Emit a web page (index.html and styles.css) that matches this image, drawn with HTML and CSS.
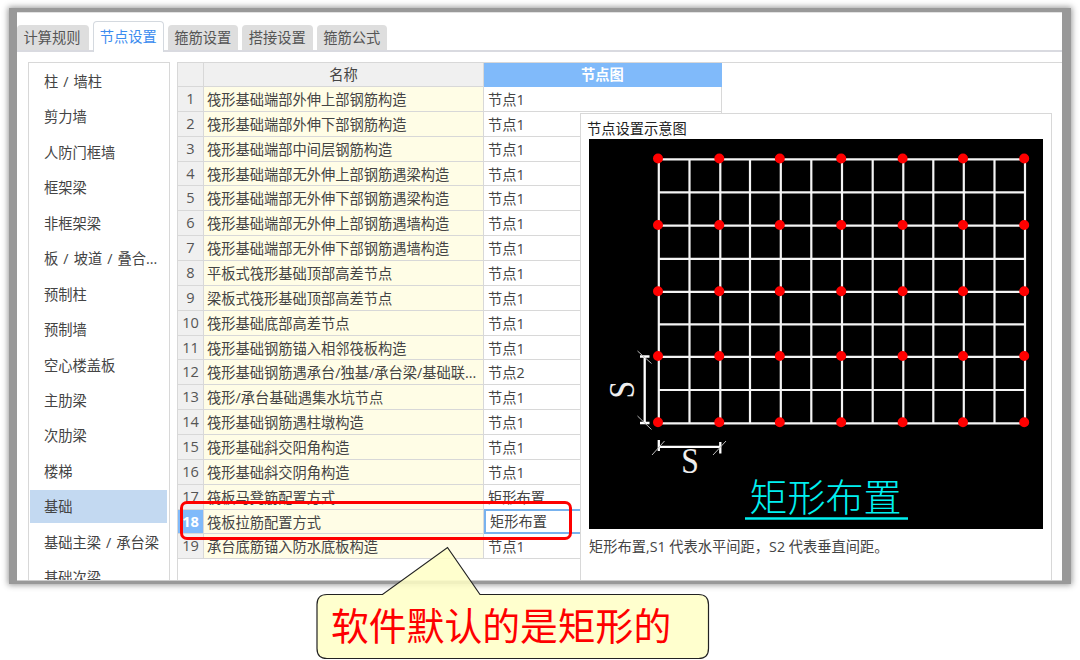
FILE: index.html
```html
<!DOCTYPE html>
<html lang="zh-CN">
<head>
    <meta charset="UTF-8">
    <meta name="viewport" content="width=device-width, initial-scale=1.0">
    <title>节点设置</title>
    <link rel="stylesheet" href="styles.css">
</head>
<body>

    <div class="frame">
        <div class="window">
            <div class="tabs">
                <div class="tab first">计算规则</div>
                <div class="tab active">节点设置</div>
                <div class="tab">箍筋设置</div>
                <div class="tab">搭接设置</div>
                <div class="tab">箍筋公式</div>
            </div>

            <div class="content">
                <ul class="sidebar">
                    <li>柱 / 墙柱</li>
                    <li>剪力墙</li>
                    <li>人防门框墙</li>
                    <li>框架梁</li>
                    <li>非框架梁</li>
                    <li class="wide">板 / 坡道 / 叠合...</li>
                    <li>预制柱</li>
                    <li>预制墙</li>
                    <li>空心楼盖板</li>
                    <li>主肋梁</li>
                    <li>次肋梁</li>
                    <li>楼梯</li>
                    <li class="selected">基础</li>
                    <li>基础主梁 / 承台梁</li>
                    <li>基础次梁</li>
                </ul>

                <div class="main">
                    <div class="row head"><div class="num"></div><div class="name">名称</div><div class="node">节点图</div></div>
                    <div class="row"><div class="num">1</div><div class="name">筏形基础端部外伸上部钢筋构造</div><div class="node">节点1</div></div>
                    <div class="row"><div class="num">2</div><div class="name">筏形基础端部外伸下部钢筋构造</div><div class="node">节点1</div></div>
                    <div class="row"><div class="num">3</div><div class="name">筏形基础端部中间层钢筋构造</div><div class="node">节点1</div></div>
                    <div class="row"><div class="num">4</div><div class="name">筏形基础端部无外伸上部钢筋遇梁构造</div><div class="node">节点1</div></div>
                    <div class="row"><div class="num">5</div><div class="name">筏形基础端部无外伸下部钢筋遇梁构造</div><div class="node">节点1</div></div>
                    <div class="row"><div class="num">6</div><div class="name">筏形基础端部无外伸上部钢筋遇墙构造</div><div class="node">节点1</div></div>
                    <div class="row"><div class="num">7</div><div class="name">筏形基础端部无外伸下部钢筋遇墙构造</div><div class="node">节点1</div></div>
                    <div class="row"><div class="num">8</div><div class="name">平板式筏形基础顶部高差节点</div><div class="node">节点1</div></div>
                    <div class="row"><div class="num">9</div><div class="name">梁板式筏形基础顶部高差节点</div><div class="node">节点1</div></div>
                    <div class="row"><div class="num">10</div><div class="name">筏形基础底部高差节点</div><div class="node">节点1</div></div>
                    <div class="row"><div class="num">11</div><div class="name">筏形基础钢筋锚入相邻筏板构造</div><div class="node">节点1</div></div>
                    <div class="row"><div class="num">12</div><div class="name">筏形基础钢筋遇承台/独基/承台梁/基础联...</div><div class="node">节点2</div></div>
                    <div class="row"><div class="num">13</div><div class="name">筏形/承台基础遇集水坑节点</div><div class="node">节点1</div></div>
                    <div class="row"><div class="num">14</div><div class="name">筏形基础钢筋遇柱墩构造</div><div class="node">节点1</div></div>
                    <div class="row"><div class="num">15</div><div class="name">筏形基础斜交阳角构造</div><div class="node">节点1</div></div>
                    <div class="row"><div class="num">16</div><div class="name">筏形基础斜交阴角构造</div><div class="node">节点1</div></div>
                    <div class="row"><div class="num">17</div><div class="name">筏板马凳筋配置方式</div><div class="node">矩形布置</div></div>
                    <div class="row current"><div class="num">18</div><div class="name">筏板拉筋配置方式</div><div class="node">矩形布置</div></div>
                    <div class="row"><div class="num">19</div><div class="name">承台底筋锚入防水底板构造</div><div class="node">节点1</div></div>
                </div>
            </div>

            <div class="popup">
                <div class="popup-title">节点设置示意图</div>
                <svg class="diagram" width="454" height="390" viewBox="589 139 454 390">
                    <!-- rebar mesh -->
                    <g class="mesh">
                        <path d="M658 159.3H1026M658 192.3H1025M658 225.6H1025M658 258.8H1025M658 291.8H1025M658 324.3H1025M658 356.8H1025M658 390H1025M658 423.3H1026"/>
                        <path d="M658.8 159V423M689.5 159V423M720.3 159V423M750 159V423M780.8 159V423M811.3 159V423M842 159V423M872.7 159V423M903.3 159V423M933.3 159V423M963.8 159V423M994.5 159V423M1025 159V423"/>
                    </g>
                    <!-- tie bars: one dot every second line -->
                    <path class="dots" d="M658 158.5h0M719.3 158.5h0M779.8 158.5h0M841.2 158.5h0M902.6 158.5h0M963 158.5h0M1024.2 158.5h0
                        M658 225h0M719.3 225h0M779.8 225h0M841.2 225h0M902.6 225h0M963 225h0M1024.2 225h0
                        M658 291.2h0M719.3 291.2h0M779.8 291.2h0M841.2 291.2h0M902.6 291.2h0M963 291.2h0M1024.2 291.2h0
                        M658 356h0M719.3 356h0M779.8 356h0M841.2 356h0M902.6 356h0M963 356h0M1024.2 356h0
                        M658 422.3h0M719.3 422.3h0M779.8 422.3h0M841.2 422.3h0M902.6 422.3h0M963 422.3h0M1024.2 422.3h0"/>
                    <!-- dimensions -->
                    <path class="dim" d="M644.7 356.5V423M640 356.5H649.5M640 423H649.5M658.8 446.8H720.3M658.8 440V451M720.3 442V453.5"/>
                    <path class="tick" d="M637.5 351L651.5 363.5M637.5 416L651.5 429.5M652 455L664.5 441M713 455L726 441"/>
                    <text class="dim-text" transform="translate(681.3 473.3) scale(.88 1)">S</text>
                    <text class="dim-text" transform="translate(633.5 398.5) rotate(-90) scale(.88 1)">S</text>
                    <text class="caption" x="749.5" y="511">矩形布置</text>
                    <path class="underline" d="M745 518.5H908"/>
                </svg>
                <div class="popup-note">矩形布置,S1 代表水平间距，S2 代表垂直间距。</div>
            </div>
        </div>
    </div>

    <div class="mark"></div>

    <div class="callout">
        <svg width="394" height="114" viewBox="316 546 394 114">
            <path d="M327 594.5H382.5L447.5 547.5L480 594.5H698.5Q708.5 594.5 708.5 604.5V648.5Q708.5 658.5 698.5 658.5H327Q317 658.5 317 648.5V604.5Q317 594.5 327 594.5Z"/>
        </svg>
        <div class="callout-text">软件默认的是矩形的</div>
    </div>

</body>
</html>
```
FILE: styles.css
```css
* {
    box-sizing: border-box;
}
body {
    margin: 0;
    width: 1080px;
    height: 660px;
    overflow: hidden;
    position: relative;
    padding: 8px 9px;
    background: #fff;
    font-family: "Open Sans", "Noto Sans CJK SC", sans-serif;
    font-size: 14.25px;
    color: #444;
}
.frame {
    height: 576px;
    padding: 4px 9px 3px 8px;
    background: #999;
    box-shadow: 0 0 6px 1px #999;
}
.window {
    position: relative;
    height: 569px;
    overflow: hidden;
    background: #fff;
    border-top: 1px solid #e2e2e2;
    border-bottom: 1px solid #ccc;
}
.tabs {
    display: flex;
    align-items: flex-end;
    gap: 4px;
    height: 39px;
    border-bottom: 2px solid #d9dae0;
}
.tab {
    width: 70.5px;
    height: 25px;
    line-height: 25px;
    text-align: center;
    white-space: nowrap;
    color: #555;
    background: #dedede;
    border-radius: 4px 4px 0 0;
}
.tab.first {
    width: 72px;
    padding-right: 2px;
}
.tab.active {
    height: 31px;
    line-height: 29px;
    margin-bottom: -2px;
    color: #3b8cef;
    background: #fff;
    border: 1.5px solid #d4d9df;
    border-bottom: none;
}
.content {
    display: flex;
    gap: 7px;
    height: 520px;
    margin: 10px 0 0 11px;
}
.sidebar {
    width: 142px;
    height: 530px;
    margin: 0;
    padding: 2px 2px 0 1px;
    list-style: none;
    border: 1px solid #d8d8d8;
}
.sidebar li {
    height: 33px;
    line-height: 34px;
    margin-bottom: 2.45px;
    padding-left: 14px;
    white-space: nowrap;
    word-spacing: 1.3px;
}
.sidebar .wide {
    word-spacing: 1.4px;
}
.sidebar .selected {
    background: #c3d9f1;
}
.main {
    flex: 1;
    border-top: 1px solid #d8d8d8;
    border-left: 1px solid #d8d8d8;
}
.row {
    display: flex;
    width: 544px;
    height: 24.86px;
    line-height: 25px;
    white-space: nowrap;
}
.row > div {
    border-right: 1px solid #d8d8d8;
    border-bottom: 1px solid #d8d8d8;
}
.row .num {
    width: 26px;
    line-height: 23px;
    text-align: center;
    background: #f0f0f0;
    color: #555;
    font-size: 14.6px;
}
.row .name {
    width: 280px;
    padding-left: 3px;
    background: #fffde6;
}
.row .node {
    flex: 1;
    padding-left: 4px;
}
.row.head {
    height: 24px;
    line-height: 24px;
}
.row.head .name {
    padding: 0;
    text-align: center;
    background: #f0f0f0;
}
.row.head .node {
    padding: 0;
    text-align: center;
    font-weight: bold;
    color: #fff;
    background: #80bafa;
    border-color: #80bafa;
}
.row.current .num {
    color: #fff;
    font-weight: bold;
    background: #80bafa;
}
.row.current .node {
    height: 25.5px;
    margin-top: -1px;
    line-height: 22px;
    border: 2px solid #78b2ee;
}
.popup {
    position: absolute;
    left: 563px;
    top: 100px;
    width: 472px;
    height: 480px;
    padding: 5px 8px;
    background: #fff;
    border: 1px solid #d8d8d8;
}
.popup-title {
    height: 20px;
    line-height: 20px;
    margin-left: -2px;
    color: #222;
}
.diagram {
    display: block;
    background: #000;
}
.popup-note {
    height: 34px;
    line-height: 35px;
    white-space: nowrap;
}
.mesh {
    fill: none;
    stroke: #f4f4f4;
    stroke-width: 2.2;
}
.dots {
    stroke: #f00;
    stroke-width: 10;
    stroke-linecap: round;
}
.dim {
    stroke: #fff;
    stroke-width: 2.3;
}
.tick {
    stroke: #bbb;
    stroke-width: 1;
}
.dim-text {
    font-family: "Liberation Serif", serif;
    font-size: 36px;
    fill: #eee;
}
.caption {
    font-family: "Noto Sans CJK SC", sans-serif;
    font-size: 38px;
    font-weight: 300;
    fill: #00f0f0;
}
.underline {
    stroke: #00f0f0;
    stroke-width: 2.3;
}
/* red outline round row 18 */
.mark {
    position: absolute;
    left: 180px;
    top: 501px;
    width: 392px;
    height: 39px;
    border: 3px solid #fe0000;
    border-radius: 7px;
}
.callout {
    position: absolute;
    left: 316px;
    top: 546px;
    width: 394px;
    height: 114px;
}
.callout svg {
    display: block;
}
.callout path {
    fill: #ffffc6;
    fill-opacity: 0.85;
    stroke: #222;
    stroke-width: 1.2;
}
.callout-text {
    position: absolute;
    left: 15px;
    top: 48px;
    line-height: 64px;
    font-size: 37.8px;
    white-space: nowrap;
    color: #fe0000;
}
```
